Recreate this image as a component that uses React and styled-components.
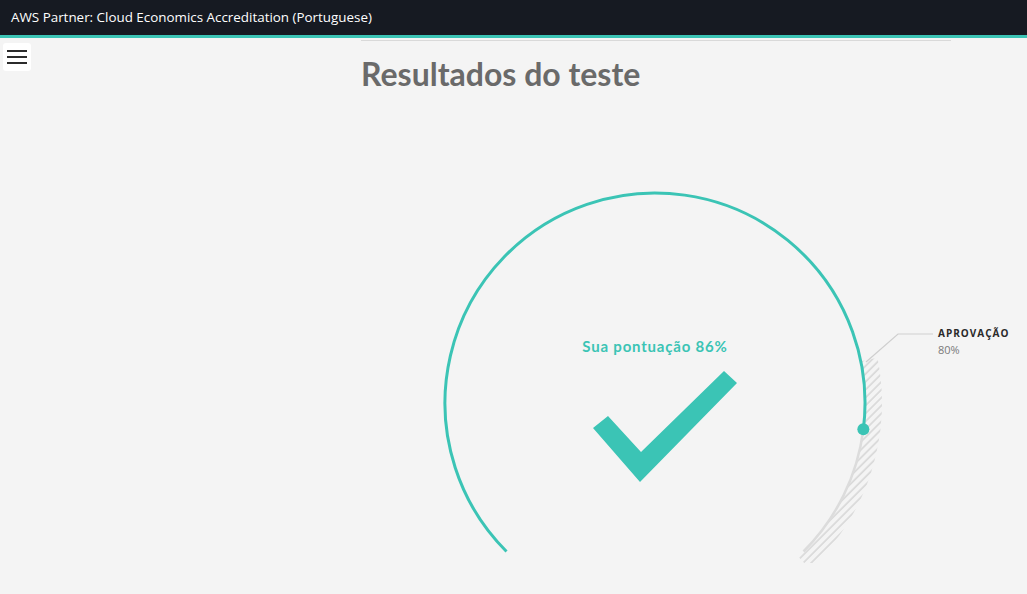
import styled, { createGlobalStyle } from 'styled-components';

const TEAL = '#3bc4b5';

const GlobalStyle = createGlobalStyle`
  html, body {
    margin: 0;
    padding: 0;
    background: #f4f4f4;
    overflow: hidden;
  }
  body {
    font-family: 'Open Sans', 'Liberation Sans', sans-serif;
  }
`;

const Header = styled.header`
  box-sizing: content-box;
  height: 34px;
  padding: 0 0 1px 11px;
  background: #161a22;
  border-bottom: 3px solid ${TEAL};
  display: flex;
  align-items: center;
  color: #fff;
  font-size: 13.4px;
`;

const Body = styled.div`
  display: flex;
  align-items: flex-start;
`;

const Sidebar = styled.aside`
  width: 358px;
  flex: 0 0 358px;
  padding: 5px 0 0 3px;
`;

const MenuButton = styled.button`
  width: 28px;
  height: 28px;
  padding: 0;
  border: none;
  border-radius: 3px;
  background: #fff;
  display: flex;
  flex-direction: column;
  justify-content: center;
  align-items: center;
  gap: 4px;

  span {
    display: block;
    width: 20px;
    height: 2px;
    background: #2b2b2b;
  }
`;

const Main = styled.main`
  width: 590px;
  padding-top: 2px;
`;

const Divider = styled.hr`
  margin: 0;
  border: none;
  border-top: 1px solid #d9d9d9;
`;

const Title = styled.h1`
  margin: 14px 0 0;
  font-family: Lato, 'Liberation Sans', sans-serif;
  font-weight: 700;
  font-size: 32px;
  line-height: 38px;
  color: #6a6a6a;
`;

const GaugeSvg = styled.svg`
  display: block;
  overflow: visible;

  .score {
    font-family: Lato, 'Liberation Sans', sans-serif;
    font-weight: 700;
    font-size: 15px;
    letter-spacing: 0.8px;
    fill: ${TEAL};
  }
  .pass-label {
    font-family: 'Open Sans', 'Liberation Sans', sans-serif;
    font-weight: 700;
    font-size: 10px;
    letter-spacing: 1px;
    fill: #2a2a2a;
  }
  .pass-value {
    font-family: 'Open Sans', 'Liberation Sans', sans-serif;
    font-size: 11px;
    fill: #7a7a7a;
  }
`;

const CX = 294;
const CY = 310;
const R = 210;

const pt = (deg, r = R) => {
  const a = (deg * Math.PI) / 180;
  return [CX + r * Math.cos(a), CY + r * Math.sin(a)];
};

const Gauge = ({ score, passing }) => {
  const start = 135;
  const end = 405;
  const scoreAngle = start + (score / 100) * 270;
  // hatch starts a little above the passing mark, like the original chart
  const passAngle = start + (passing / 100) * 270 - 2.5;
  const [sx, sy] = pt(start);
  const [px, py] = pt(scoreAngle);
  const [ex, ey] = pt(end);
  const large = scoreAngle - start > 180 ? 1 : 0;
  const rOut = 227;
  const [h1x, h1y] = pt(passAngle);
  const [h2x, h2y] = pt(passAngle, rOut);
  const [h3x, h3y] = pt(end + 2, rOut);
  const [h4x, h4y] = pt(end + 2);

  return (
    <GaugeSvg width="590" height="470" viewBox="0 0 590 470">
      <defs>
        <pattern id="hatch" width="5.6" height="5.6" patternUnits="userSpaceOnUse" patternTransform="rotate(45)">
          <line x1="1" y1="0" x2="1" y2="5.6" stroke="#d3d3d3" strokeWidth="1.4" />
        </pattern>
      </defs>
      <path
        d={`M${h1x},${h1y} L${h2x},${h2y} A${rOut},${rOut} 0 0 1 ${h3x},${h3y} L${h4x},${h4y} A${R},${R} 0 0 0 ${h1x},${h1y} Z`}
        fill="url(#hatch)"
      />
      <path d={`M${px},${py} A${R},${R} 0 0 1 ${ex},${ey}`} fill="none" stroke="#dcdcdc" strokeWidth="2.5" />
      <path d={`M${sx},${sy} A${R},${R} 0 ${large} 1 ${px},${py}`} fill="none" stroke={TEAL} strokeWidth="3" />
      <circle cx={px} cy={py} r="6" fill={TEAL} />
      <polyline points="505,269 537,241 572,241" fill="none" stroke="#cfcfcf" strokeWidth="1.2" />
      <text className="pass-label" x="577" y="244">APROVAÇÃO</text>
      <text className="pass-value" x="577" y="261">{passing}%</text>
      <text className="score" x={CX} y="259" textAnchor="middle">Sua pontuação {score}%</text>
      <polygon points="232,335 247,323 280,359 363,278 376,290 279,389" fill={TEAL} />
    </GaugeSvg>
  );
};

export default function App() {
  return (
    <>
      <GlobalStyle />
      <Header>AWS Partner: Cloud Economics Accreditation (Portuguese)</Header>
      <Body>
        <Sidebar>
          <MenuButton aria-label="menu">
            <span />
            <span />
            <span />
          </MenuButton>
        </Sidebar>
        <Main>
          <Divider />
          <Title>Resultados do teste</Title>
          <Gauge score={86} passing={80} />
        </Main>
      </Body>
    </>
  );
}
